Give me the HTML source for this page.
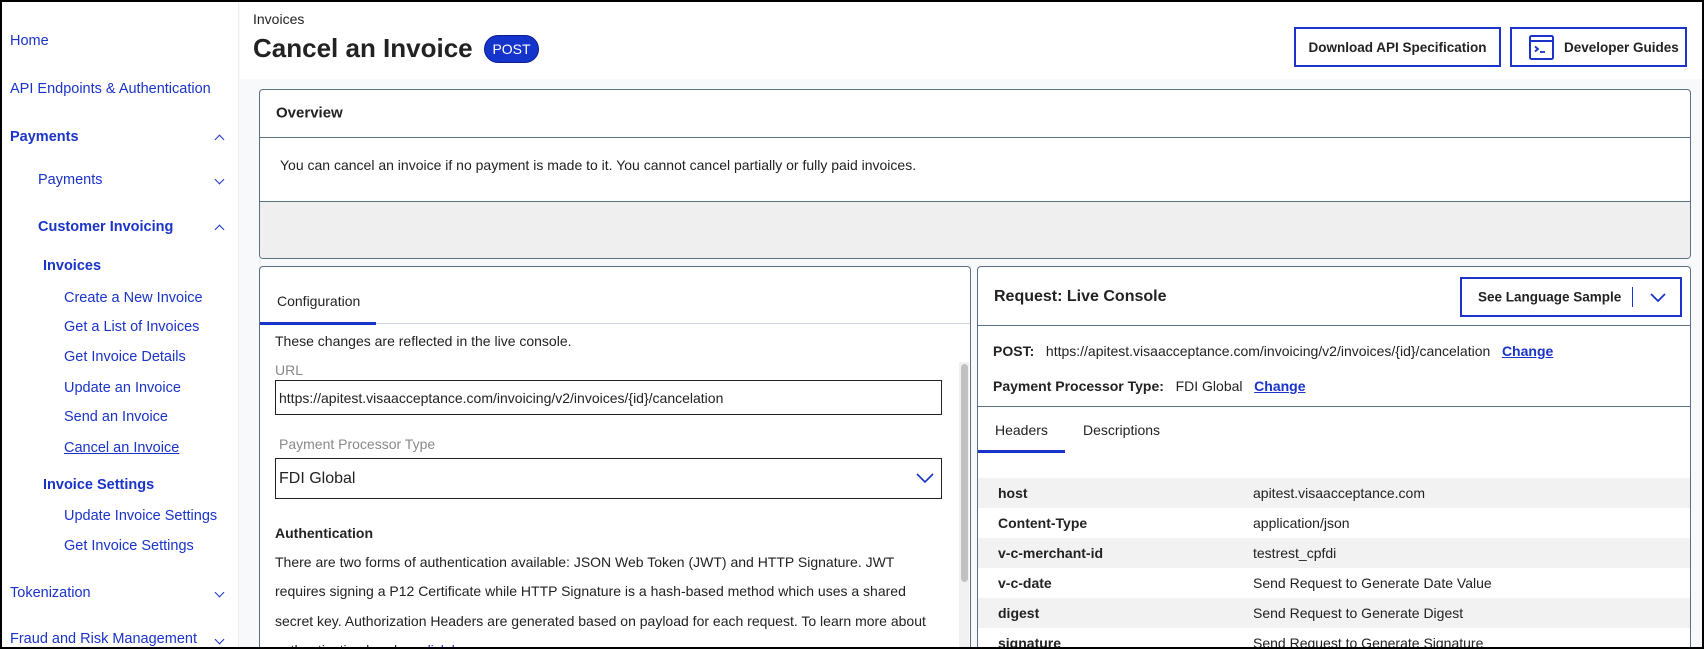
<!DOCTYPE html>
<html><head><meta charset="utf-8"><style>
*{box-sizing:border-box;margin:0;padding:0}
html{width:1704px;height:649px;overflow:hidden}
body{width:1704px;height:649px;overflow:hidden;background:#f8f9fa;font-family:"Liberation Sans",Arial,sans-serif;color:#222;position:relative}
.frame{position:absolute;left:0;top:0;width:1704px;height:649px;border:2px solid #000;pointer-events:none;z-index:10}
.a{position:absolute;white-space:nowrap}
.side{position:absolute;left:0;top:0;width:239px;height:649px;background:#fff;border-right:1px solid #eceef0;overflow:hidden}
.nav{position:absolute;color:#1a33c8;font-size:14.5px;transform:translateY(-50%)}
.b{font-weight:bold}
.chev{position:absolute;width:7px;height:7px;border-left:1.6px solid #1a33c8;border-top:1.6px solid #1a33c8}
.up{transform:rotate(45deg)}
.dn{transform:rotate(225deg)}
.card{position:absolute;background:#fff;border:1px solid #5d7089;border-radius:4px;overflow:hidden}
.t{font-size:14px;transform:translateY(-50%)}
.btn{position:absolute;border:2px solid #1a33c8;background:#fff;font-weight:bold;font-size:13.5px;display:flex;align-items:center;justify-content:center}
a{color:#1a33c8}
.row{position:absolute;left:0;width:713px;height:30px;font-size:14px}
.row span{position:absolute;top:50%;transform:translateY(-50%)}
</style></head><body>
<div class="side">
<div class="nav" style="left:10px;top:41px">Home</div>
<div class="nav" style="left:10px;top:89px">API Endpoints &amp; Authentication</div>
<div class="nav b" style="left:10px;top:137px">Payments</div>
<div class="chev up" style="left:216px;top:136px"></div>
<div class="nav" style="left:38px;top:180px">Payments</div>
<div class="chev dn" style="left:216px;top:176px"></div>
<div class="nav b" style="left:38px;top:227px">Customer Invoicing</div>
<div class="chev up" style="left:216px;top:226px"></div>
<div class="nav b" style="left:43px;top:266px">Invoices</div>
<div class="nav" style="left:64px;top:298px">Create a New Invoice</div>
<div class="nav" style="left:64px;top:327px">Get a List of Invoices</div>
<div class="nav" style="left:64px;top:357px">Get Invoice Details</div>
<div class="nav" style="left:64px;top:388px">Update an Invoice</div>
<div class="nav" style="left:64px;top:417px">Send an Invoice</div>
<div class="nav" style="left:64px;top:448px;text-decoration:underline">Cancel an Invoice</div>
<div class="nav b" style="left:43px;top:485px">Invoice Settings</div>
<div class="nav" style="left:64px;top:516px">Update Invoice Settings</div>
<div class="nav" style="left:64px;top:546px">Get Invoice Settings</div>
<div class="nav" style="left:10px;top:593px">Tokenization</div>
<div class="chev dn" style="left:216px;top:589px"></div>
<div class="nav" style="left:10px;top:639px">Fraud and Risk Management</div>
<div class="chev dn" style="left:216px;top:636px"></div>
</div>
<div style="position:absolute;left:240px;top:0;width:1464px;height:79px;background:#fff"></div>
<div class="a" style="left:253px;top:11px;font-size:14px">Invoices</div>
<div class="a" style="left:253px;top:33px;font-size:26px;font-weight:bold">Cancel an Invoice</div>
<div class="a" style="left:484px;top:35px;width:55px;height:28px;border-radius:14px;background:#1434cb;border:1px solid #0c1f8a;color:#fff;font-size:14px;display:flex;align-items:center;justify-content:center">POST</div>
<div class="btn" style="left:1294px;top:27px;width:207px;height:40px">Download API Specification</div>
<div class="btn" style="left:1510px;top:27px;width:177px;height:40px;justify-content:flex-start;padding-left:17px">
<svg width="25" height="25" viewBox="0 0 25 25" style="margin-right:10px"><rect x="1" y="1" width="23" height="23" rx="1.5" fill="none" stroke="#1a33c8" stroke-width="2"/><line x1="1" y1="6" x2="24" y2="6" stroke="#1a33c8" stroke-width="2"/><path d="M6 11.5l3 2.5-3 2.5" fill="none" stroke="#1a33c8" stroke-width="1.8"/><line x1="11" y1="17" x2="16" y2="17" stroke="#1a33c8" stroke-width="1.8"/></svg>Developer Guides</div>

<div class="card" style="left:259px;top:89px;width:1432px;height:170px">
<div style="position:absolute;left:0;top:47px;width:100%;border-top:1px solid #5d7089"></div>
<div class="a t b" style="left:16px;top:23px;font-size:15px">Overview</div>
<div class="a t" style="left:20px;top:75px">You can cancel an invoice if no payment is made to it. You cannot cancel partially or fully paid invoices.</div>
<div style="position:absolute;left:0;top:111px;width:100%;height:60px;background:#efefef;border-top:1px solid #5d7089"></div>
</div>

<div class="card" style="left:259px;top:266px;width:712px;height:383px;border-bottom:none;border-radius:4px 4px 0 0">
<div class="a t" style="left:17px;top:34px">Configuration</div>
<div style="position:absolute;left:0;top:56px;width:100%;border-top:1px solid #ccd3db"></div>
<div style="position:absolute;left:0;top:55px;width:116px;height:3px;background:#1a33c8"></div>
<div class="a t" style="left:15px;top:74px">These changes are reflected in the live console.</div>
<div style="position:absolute;left:699px;top:95px;width:10px;height:300px;background:#f1f1f1"></div>
<div style="position:absolute;left:701px;top:97px;width:7px;height:218px;background:#c1c1c1;border-radius:4px"></div>
<div class="a t" style="left:15px;top:103px;color:#888">URL</div>
<div style="position:absolute;left:15px;top:113px;width:667px;height:35px;border:1px solid #222"></div>
<div class="a t" style="left:19px;top:131px">https://apitest.visaacceptance.com/invoicing/v2/invoices/{id}/cancelation</div>
<div class="a t" style="left:19px;top:177px;color:#888">Payment Processor Type</div>
<div style="position:absolute;left:15px;top:191px;width:667px;height:41px;border:1px solid #222"></div>
<div class="a t" style="left:19px;top:212px;font-size:16px">FDI Global</div>
<svg style="position:absolute;left:656px;top:206px" width="18" height="11" viewBox="0 0 18 11"><path d="M1 1l8 8 8-8" fill="none" stroke="#1a33c8" stroke-width="1.6"/></svg>
<div class="a t b" style="left:15px;top:266px">Authentication</div>
<div style="position:absolute;left:15px;top:281px;width:672px;font-size:14px;line-height:29.3px">There are two forms of authentication available: JSON Web Token (JWT) and HTTP Signature. JWT requires signing a P12 Certificate while HTTP Signature is a hash-based method which uses a shared secret key. Authorization Headers are generated based on payload for each request. To learn more about authentication headers <a href="#">click here</a><br>For your convenience, you can quickly configure this API Console to send all sample requests with either</div>
</div>

<div class="card" style="left:977px;top:266px;width:714px;height:383px;border-bottom:none;border-radius:4px 4px 0 0">
<div class="a t b" style="left:16px;top:30px;font-size:16px">Request: Live Console</div>
<div style="position:absolute;left:482px;top:10px;width:222px;height:40px;border:2px solid #1a33c8;font-weight:bold;font-size:13.5px"><span style="position:absolute;left:16px;top:50%;transform:translateY(-50%)">See Language Sample</span><div style="position:absolute;left:170px;top:8px;height:20px;border-left:1.5px solid #1a33c8"></div><svg style="position:absolute;left:188px;top:14px" width="16" height="9" viewBox="0 0 16 9"><path d="M1 1l7 7 7-7" fill="none" stroke="#1a33c8" stroke-width="1.8"/></svg></div>
<div style="position:absolute;left:0;top:58px;width:100%;border-top:1px solid #5d7089"></div>
<div class="a t" style="left:15px;top:84px"><b>POST:</b>&nbsp;&nbsp; https://apitest.visaacceptance.com/invoicing/v2/invoices/{id}/cancelation&nbsp;&nbsp; <a href="#" style="font-weight:bold">Change</a></div>
<div class="a t" style="left:15px;top:119px"><b>Payment Processor Type:</b>&nbsp;&nbsp; FDI Global&nbsp;&nbsp; <a href="#" style="font-weight:bold">Change</a></div>
<div style="position:absolute;left:0;top:139px;width:100%;border-top:1px solid #5d7089"></div>
<div class="a t" style="left:17px;top:163px">Headers</div>
<div class="a t" style="left:105px;top:163px">Descriptions</div>
<div style="position:absolute;left:0;top:183px;width:87px;height:3px;background:#1a33c8"></div>
<div class="row" style="top:211px;background:#f2f2f2"><span class="b" style="left:20px">host</span><span style="left:275px">apitest.visaacceptance.com</span></div>
<div class="row" style="top:241px"><span class="b" style="left:20px">Content-Type</span><span style="left:275px">application/json</span></div>
<div class="row" style="top:271px;background:#f2f2f2"><span class="b" style="left:20px">v-c-merchant-id</span><span style="left:275px">testrest_cpfdi</span></div>
<div class="row" style="top:301px"><span class="b" style="left:20px">v-c-date</span><span style="left:275px">Send Request to Generate Date Value</span></div>
<div class="row" style="top:331px;background:#f2f2f2"><span class="b" style="left:20px">digest</span><span style="left:275px">Send Request to Generate Digest</span></div>
<div class="row" style="top:361px;height:22px"><span class="b" style="left:20px;top:15px">signature</span><span style="left:275px;top:15px">Send Request to Generate Signature</span></div>
</div>
<div class="frame"></div>
</body></html>
